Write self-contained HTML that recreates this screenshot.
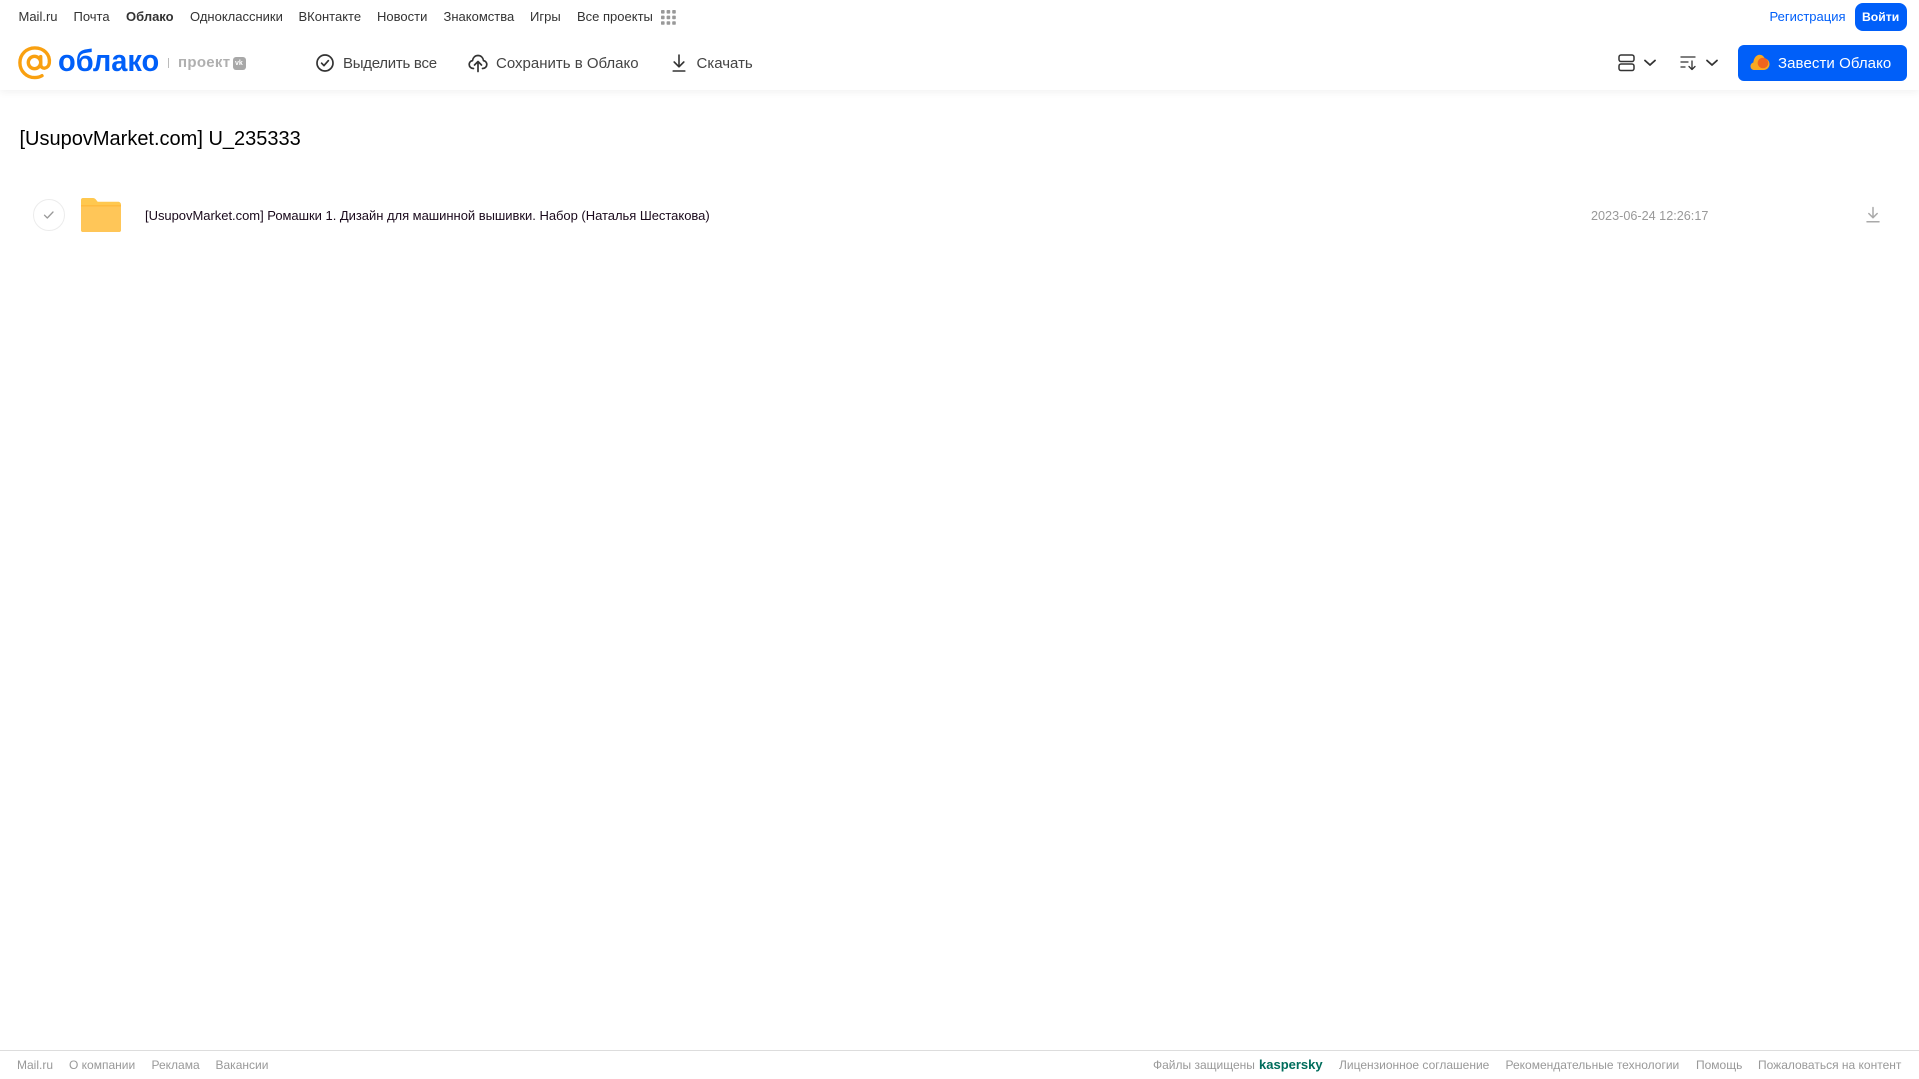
<!DOCTYPE html>
<html lang="ru">
<head>
<meta charset="utf-8">
<title>Облако</title>
<style>
html,body{margin:0;padding:0;width:1919px;height:1079px;overflow:hidden;background:#fff;font-family:"Liberation Sans",Arial,sans-serif}
.t{position:absolute;white-space:nowrap;line-height:1}
.nav{font-size:13px;color:#333;top:10px}
.tb{font-size:15px;color:#444;top:56px}
.ft{font-size:12px;color:#999;top:1059px}
svg{position:absolute;overflow:visible}
#hdr{position:absolute;left:0;top:0;width:1919px;height:90px;background:#fff;box-shadow:0 2px 8px rgba(0,0,0,.06)}
</style>
</head>
<body>
<div id="hdr"></div>

<div class="t nav" style="left:18.5px">Mail.ru</div>
<div class="t nav" style="left:73.5px">Почта</div>
<div class="t nav" style="left:126px;font-weight:bold">Облако</div>
<div class="t nav" style="left:190px">Одноклассники</div>
<div class="t nav" style="left:298.5px">ВКонтакте</div>
<div class="t nav" style="left:377px">Новости</div>
<div class="t nav" style="left:443.5px">Знакомства</div>
<div class="t nav" style="left:530px">Игры</div>
<div class="t nav" style="left:577px">Все проекты</div>
<svg style="left:661px;top:10px" width="15" height="15" fill="#999">
<rect x="0" y="0" width="3.6" height="3.6" rx=".8"/><rect x="5.6" y="0" width="3.6" height="3.6" rx=".8"/><rect x="11.2" y="0" width="3.6" height="3.6" rx=".8"/>
<rect x="0" y="5.6" width="3.6" height="3.6" rx=".8"/><rect x="5.6" y="5.6" width="3.6" height="3.6" rx=".8"/><rect x="11.2" y="5.6" width="3.6" height="3.6" rx=".8"/>
<rect x="0" y="11.2" width="3.6" height="3.6" rx=".8"/><rect x="5.6" y="11.2" width="3.6" height="3.6" rx=".8"/><rect x="11.2" y="11.2" width="3.6" height="3.6" rx=".8"/>
</svg>

<div class="t nav" style="left:1769.5px;color:#005ff9">Регистрация</div>
<div style="position:absolute;left:1855px;top:3px;width:52px;height:28px;border-radius:8px;background:#005ff9"></div>
<div class="t nav" style="left:1862px;top:10.500px;color:#fff;font-weight:bold;font-size:12.200px">Войти</div>

<!-- logo -->
<svg style="left:18px;top:46px" width="34" height="34" viewBox="0 0 34 34" fill="none" stroke="#f9a010" stroke-width="3.4">
<circle cx="16.5" cy="16.5" r="6.2"/>
<path d="M22.7 10.6V18.5c0 5.2 7.6 5 8.6-1.5C32.4 8.2 25.6 1.9 16.8 1.900 8.400 1.900 1.900 8.400 1.900 16.700c0 8.400 6.600 14.900 14.900 14.900 3 0 5.200-.7 7.200-1.900" stroke-linecap="round"/>
</svg>
<div class="t" style="left:57.500px;top:45px;font-size:31px;font-weight:bold;color:#005ff9;transform:scaleX(.935);transform-origin:0 0">облако</div>
<div style="position:absolute;left:168px;top:58px;width:1px;height:10px;background:#bbb"></div>
<div class="t" style="left:178px;top:55px;font-size:15px;font-weight:bold;color:#b0b0b0;letter-spacing:.3px">проект</div>
<div style="position:absolute;left:233px;top:57px;width:13px;height:13px;border-radius:3px;background:#a8a8a8"></div>
<div class="t" style="left:235px;top:60px;font-size:7px;font-weight:bold;color:#fff">vk</div>

<!-- toolbar -->
<svg style="left:315px;top:53px" width="20" height="20" viewBox="0 0 20 20" fill="none" stroke="#333" stroke-width="1.7" stroke-linecap="round" stroke-linejoin="round">
<circle cx="10" cy="10" r="8"/><path d="M6.6 10.2l2.4 2.4 4.4-5"/>
</svg>
<div class="t tb" style="left:343px;letter-spacing:-.27px">Выделить все</div>

<svg style="left:468px;top:53px" width="20" height="20" viewBox="0 0 20 20" fill="none" stroke="#333" stroke-width="1.7" stroke-linecap="round" stroke-linejoin="round">
<path d="M5.500 15.500C3 15.500 1.200 13.800 1.200 11.500c0-2 1.400-3.600 3.300-3.900C5 4.500 7.200 2.500 10 2.500c2.800 0 5 2 5.500 5.100 1.900.3 3.300 1.900 3.300 3.900 0 2.300-1.800 4-4.300 4"/>
<path d="M10 18.500V9M6.500 12L10 8.500l3.500 3.500"/>
</svg>
<div class="t tb" style="left:496px">Сохранить в Облако</div>

<svg style="left:670px;top:53px" width="18" height="20" viewBox="0 0 18 20" fill="none" stroke="#333" stroke-width="1.6" stroke-linecap="round" stroke-linejoin="round">
<path d="M9 2v11.500M4.200 9L9 13.800 13.800 9M3.200 18h11.600"/>
</svg>
<div class="t tb" style="left:696.500px">Скачать</div>

<!-- view/sort -->
<svg style="left:1618px;top:54px" width="18" height="18" viewBox="0 0 18 18" fill="none" stroke="#333" stroke-width="1.5">
<rect x="1" y="1" width="15" height="6.500" rx="2"/><rect x="1" y="10" width="15" height="6.500" rx="2"/>
</svg>
<svg style="left:1644px;top:59px" width="12" height="8" viewBox="0 0 12 8" fill="none" stroke="#333" stroke-width="1.800" stroke-linecap="round" stroke-linejoin="round"><path d="M1 1.500l5 4.500 5-4.500"/></svg>
<svg style="left:1680px;top:55px" width="18" height="16" viewBox="0 0 18 16" fill="none" stroke="#333" stroke-width="1.300" stroke-linecap="round" stroke-linejoin="round">
<path d="M1 2h14M1 7h7M1 12h4M12 6v8.500M9 11.500l3 3 3-3"/>
</svg>
<svg style="left:1706px;top:59px" width="12" height="8" viewBox="0 0 12 8" fill="none" stroke="#333" stroke-width="1.800" stroke-linecap="round" stroke-linejoin="round"><path d="M1 1.500l5 4.500 5-4.500"/></svg>

<div style="position:absolute;left:1738px;top:45px;width:169px;height:36px;border-radius:6px;background:#005ff9"></div>
<svg style="left:1750px;top:54px" width="20" height="17" viewBox="0 0 20 17">
<path d="M4.500 16C2 16 .5 14.300 .5 12.200c0-1.800 1.200-3.300 2.800-3.700C3.800 4 6.500 .8 9.500 .8c2.500 0 4.400 1.500 5.200 3.700 2.700.3 4.800 2.600 4.800 5.500 0 3.400-2.500 6-5.800 6z" fill="#f9a821"/>
<circle cx="13" cy="9" r="5.300" fill="#f0641e"/>
</svg>
<div class="t" style="left:1778px;top:56px;font-size:15px;color:#fff;letter-spacing:.08px">Завести Облако</div>

<!-- title -->
<div class="t" style="left:19.500px;top:128.500px;font-size:20px;color:#000">[UsupovMarket.com] U_235333</div>

<!-- row -->
<div style="position:absolute;left:33px;top:199px;width:30px;height:30px;border-radius:50%;border:1px solid #ececec"></div>
<svg style="left:42px;top:209px" width="14" height="12" viewBox="0 0 14 12" fill="none" stroke="#999" stroke-width="1.300" stroke-linecap="round" stroke-linejoin="round"><path d="M2.500 6.200l2.800 2.800 5.700-6"/></svg>
<svg style="left:81px;top:198px" width="40" height="34" viewBox="0 0 42 36" preserveAspectRatio="none">
<path d="M2 0h10.500c1.500 0 2.500.7 3.300 1.800L17.500 4H39c1.700 0 3 1.300 3 3v27c0 1.100-.9 2-2 2H2c-1.100 0-2-.9-2-2V2C0 .9.900 0 2 0z" fill="#ffc84f"/>
<path d="M0 9h42v25c0 1.100-.9 2-2 2H2c-1.100 0-2-.9-2-2z" fill="#ffc658"/>
<path d="M0 7.500h42V9H0z" fill="#ffb93d"/>
</svg>
<div class="t" style="left:145px;top:209px;font-size:13px;color:#1a0a1c;letter-spacing:-.03px">[UsupovMarket.com] Ромашки 1. Дизайн для машинной вышивки. Набор (Наталья Шестакова)</div>
<div class="t" style="left:1591px;top:209.500px;font-size:12.650px;color:#999">2023-06-24 12:26:17</div>
<svg style="left:1866px;top:206px" width="14" height="18" viewBox="0 0 14 18" fill="none" stroke="#aaa" stroke-width="1.500" stroke-linecap="round" stroke-linejoin="round">
<path d="M7 1.500v10M2.800 7.500L7 11.700l4.200-4.200M1 15.800h12"/>
</svg>

<!-- footer -->
<div style="position:absolute;left:0;top:1050px;width:1919px;height:1px;background:#ddd"></div>
<div class="t ft" style="left:17px">Mail.ru</div>
<div class="t ft" style="left:69px">О компании</div>
<div class="t ft" style="left:151.500px">Реклама</div>
<div class="t ft" style="left:215.500px">Вакансии</div>
<div class="t ft" style="left:1153px">Файлы защищены</div>
<div class="t" style="left:1259px;top:1058px;font-size:13px;font-weight:bold;color:#006d5c">kaspersky</div>
<div class="t ft" style="left:1339px">Лицензионное соглашение</div>
<div class="t ft" style="left:1505.500px">Рекомендательные технологии</div>
<div class="t ft" style="left:1696px">Помощь</div>
<div class="t ft" style="left:1758px">Пожаловаться на контент</div>
</body>
</html>
